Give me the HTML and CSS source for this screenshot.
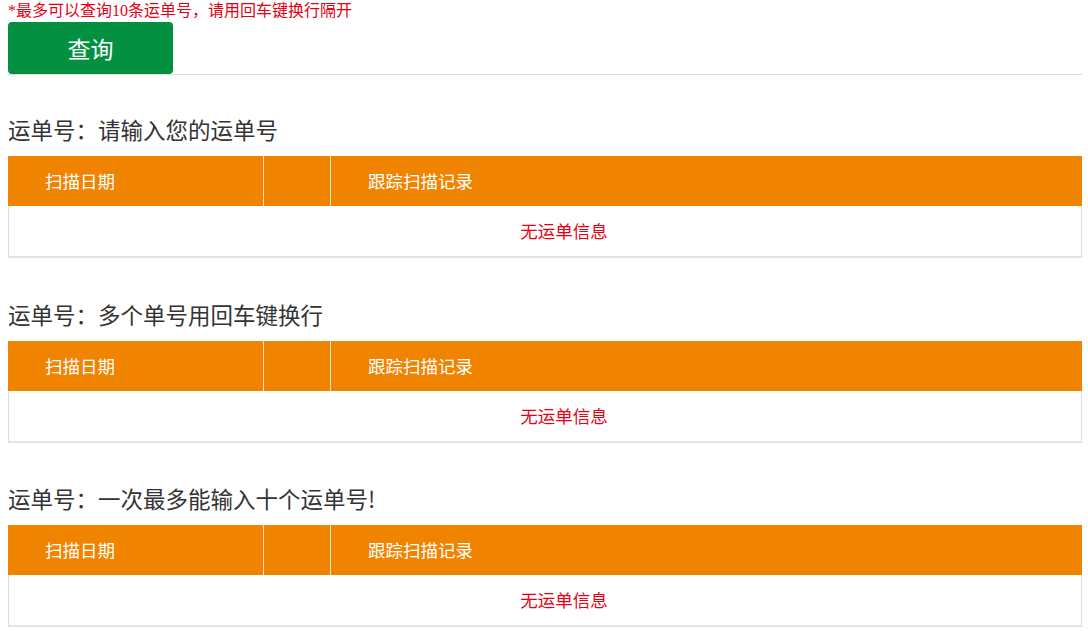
FILE: index.html
```html
<!DOCTYPE html>
<html lang="zh-CN">
<head>
    <meta charset="UTF-8">
    <meta name="viewport" content="width=device-width, initial-scale=1.0">
    <title>运单查询</title>
    <link rel="stylesheet" href="styles.css">
</head>
<body>
    <!-- Query bar -->
    <div class="query-bar">
        <p class="tip">*最多可以查询10条运单号，请用回车键换行隔开</p>
        <button class="query-btn" type="button">查询</button>
    </div>

    <!-- Results -->
    <div class="result">
        <h3 class="waybill">运单号：请输入您的运单号</h3>
        <div class="track-table">
            <div class="track-head">
                <span class="col col-date">扫描日期</span>
                <span class="col col-time"></span>
                <span class="col col-record">跟踪扫描记录</span>
            </div>
            <div class="track-empty">无运单信息</div>
        </div>
    </div>

    <div class="result">
        <h3 class="waybill">运单号：多个单号用回车键换行</h3>
        <div class="track-table">
            <div class="track-head">
                <span class="col col-date">扫描日期</span>
                <span class="col col-time"></span>
                <span class="col col-record">跟踪扫描记录</span>
            </div>
            <div class="track-empty">无运单信息</div>
        </div>
    </div>

    <div class="result">
        <h3 class="waybill">运单号：一次最多能输入十个运单号!</h3>
        <div class="track-table">
            <div class="track-head">
                <span class="col col-date">扫描日期</span>
                <span class="col col-time"></span>
                <span class="col col-record">跟踪扫描记录</span>
            </div>
            <div class="track-empty">无运单信息</div>
        </div>
    </div>
</body>
</html>
```

FILE: styles.css
```css
body {
    margin: 0;
    padding: 0 6px 0 8px;
    font-family: "Noto Sans CJK SC", "Noto Sans", sans-serif;
    background: #fff;
    color: #333;
}
.query-bar {
    border-bottom: 1px solid #ddd;
}
.tip {
    margin: 0;
    height: 22px;
    line-height: 22px;
    font-size: 16px;
    color: #e60012;
    font-family: "Liberation Serif", "Noto Sans CJK SC", serif;
}
.query-btn {
    display: block;
    width: 165px;
    height: 52px;
    border: none;
    border-radius: 4px;
    background: #039141;
    color: #fff;
    font-family: "Noto Sans CJK SC", sans-serif;
    font-size: 23px;
    padding: 0;
    cursor: pointer;
}
.result {
    margin-top: 39px;
}
.result + .result {
    margin-top: 41px;
}
.result:last-child {
    margin-top: 40px;
}
.waybill {
    margin: 0 0 12px;
    height: 30px;
    line-height: 30px;
    font-size: 22.5px;
    font-weight: normal;
    color: #333;
}
.track-table {
    width: 1074px;
}
.track-head {
    display: grid;
    grid-template-columns: 256px 67px 1fr;
    height: 50px;
    background: #f08300;
    color: #fff;
    font-size: 17.5px;
    line-height: 50px;
}
.col {
    padding-left: 37px;
    border-right: 1px solid #fbe3c6;
}
.col-time {
    padding-left: 0;
}
.col-record {
    border-right: none;
}
.track-empty {
    height: 50px;
    line-height: 50px;
    padding-left: 38px;
    text-align: center;
    font-size: 17.5px;
    color: #e60012;
    border: 1px solid #ddd;
    border-top: none;
    border-bottom: 2px solid #e2e2e2;
}
```
